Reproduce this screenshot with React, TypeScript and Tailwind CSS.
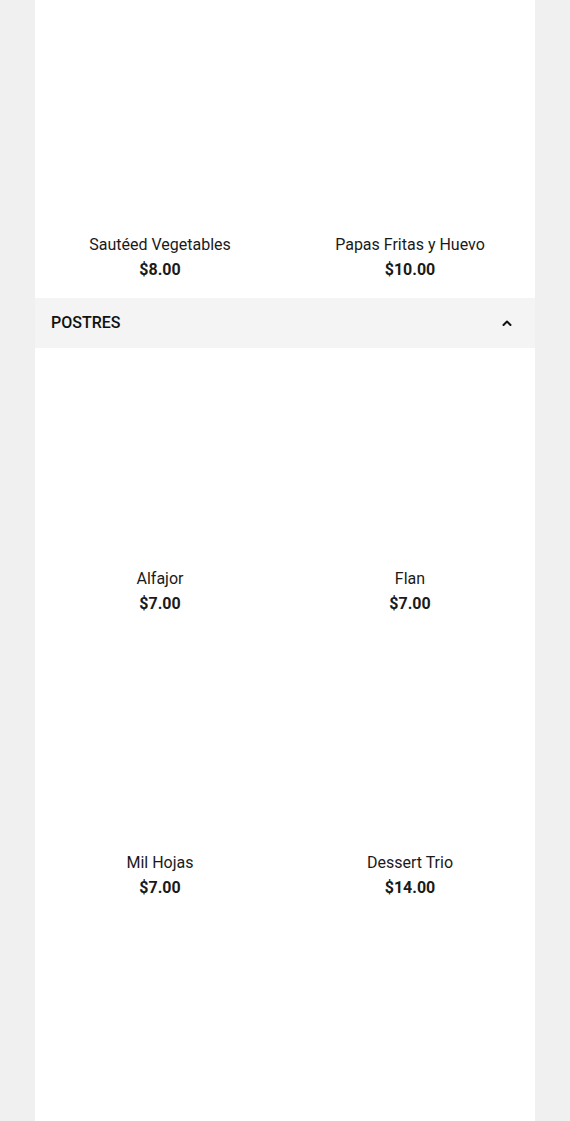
const FIRST = [
  { name: 'Sautéed Vegetables', price: '$8.00' },
  { name: 'Papas Fritas y Huevo', price: '$10.00' },
]

const POSTRES = [
  { name: 'Alfajor', price: '$7.00' },
  { name: 'Flan', price: '$7.00' },
  { name: 'Mil Hojas', price: '$7.00' },
  { name: 'Dessert Trio', price: '$14.00' },
]

function Item({ name, price }: { name: string; price: string }) {
  return (
    <div className="flex flex-col items-center h-[284px] pt-2">
      <div className="w-full h-[200px] bg-white" />
      <div className="mt-[11px] text-[16px] leading-6 text-[#1a1a1a]">{name}</div>
      <div className="text-[16px] leading-[26px] font-bold text-[#1a1a1a]">{price}</div>
    </div>
  )
}

function Chevron() {
  return (
    <svg width="14" height="14" viewBox="0 0 14 14" fill="none">
      <path d="M3.5 9 L7 5.5 L10.5 9" stroke="#111" strokeWidth="2" strokeLinecap="round" strokeLinejoin="round" />
    </svg>
  )
}

export default function App() {
  return (
    <div className="h-[1121px] overflow-hidden bg-[#f0f0f0]" style={{ fontFamily: 'Roboto, "Liberation Sans", sans-serif' }}>
      <div className="mx-auto w-[500px] h-full bg-white">
        <div className="grid grid-cols-2 pt-[14px]">
          {FIRST.map(it => <Item key={it.name} {...it} />)}
        </div>
        <div className="h-[50px] bg-[#f4f4f4] flex items-center justify-between pl-4 pr-[21px]">
          <span className="text-[16px] font-medium text-[#111]">POSTRES</span>
          <Chevron />
        </div>
        <div className="grid grid-cols-2">
          {POSTRES.map(it => <Item key={it.name} {...it} />)}
        </div>
      </div>
    </div>
  )
}
